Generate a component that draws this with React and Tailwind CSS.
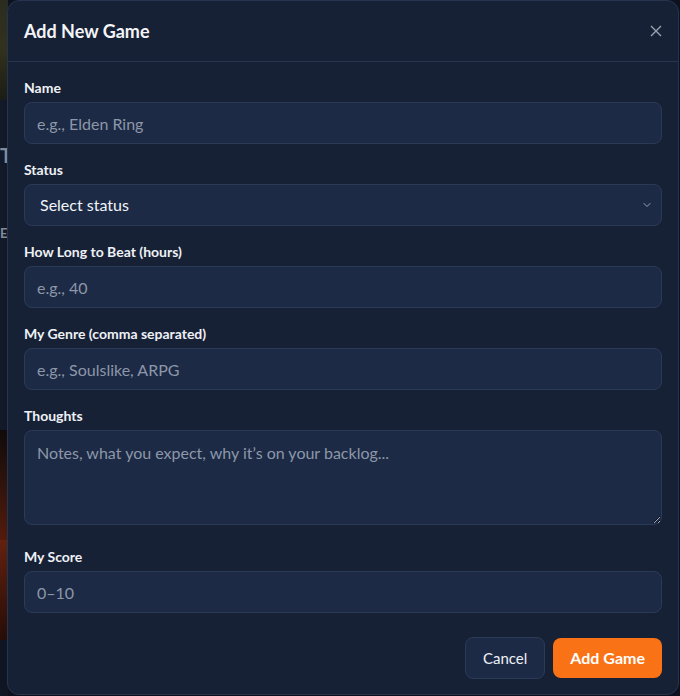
import { ChevronDown } from 'lucide-react';

const inputCls =
    'block w-full h-[42px] rounded-lg border border-[#2b3a57] bg-[#1c2a46] px-3 text-base text-slate-100 placeholder:text-[#8d97a8] outline-none';

function Field({ label, children, className = '' }) {
    return (
        <div className={`flex flex-col gap-1 ${className}`}>
            <label className="text-sm leading-5 font-bold text-[#eef1f6]">{label}</label>
            {children}
        </div>
    );
}

export default function App() {
    return (
        <div className="relative h-[696px] w-full overflow-hidden bg-[#0e1322] font-['Lato','Segoe_UI',sans-serif]">
            {/* page behind the dialog, only its left edge shows */}
            <div className="flex h-full w-[8px] flex-col">
                <div className="h-[100px] bg-gradient-to-b from-[#2a2d20] via-[#35341f] to-[#1d2017]" />
                <div className="h-[330px] bg-[#141b2b] font-bold leading-none text-[#8d96a4]">
                    <div className="pt-[45px] text-[20px]">T</div>
                    <div className="pt-[62px] text-[13px]">E</div>
                </div>
                <div className="h-[110px] bg-gradient-to-b from-[#120c0b] to-[#5a1d0c]" />
                <div className="h-[100px] bg-gradient-to-b from-[#6b2410] to-[#2a0e08]" />
                <div className="flex-1 bg-[#101726]" />
            </div>

            {/* dialog */}
            <div className="absolute left-[7px] top-0 w-[672px] rounded-xl border border-[#27344d] bg-[#172135] shadow-2xl">
                <div className="flex h-[61px] items-center justify-between border-b border-[#27344d] px-4">
                    <h2 className="text-lg font-bold text-[#f3f5f8]">Add New Game</h2>
                    <button className="text-[#9aa3b2]">
                        <svg width="12" height="12" viewBox="0 0 12 12" fill="none" stroke="currentColor" strokeWidth="1.4">
                            <path d="M1 1l10 10M11 1L1 11" />
                        </svg>
                    </button>
                </div>

                <form className="flex flex-col gap-4 px-4 pt-4">
                    <Field label="Name">
                        <input className={inputCls} placeholder="e.g., Elden Ring" />
                    </Field>

                    <Field label="Status">
                        <div className="relative">
                            <select className={`${inputCls} appearance-none pl-[15px]`} defaultValue="">
                                <option value="">Select status</option>
                                <option>Backlog</option>
                                <option>Playing</option>
                                <option>Completed</option>
                            </select>
                            <ChevronDown className="pointer-events-none absolute right-[9px] top-[15px] h-[12px] w-[12px] text-[#9aa3b2]" strokeWidth={2} />
                        </div>
                    </Field>

                    <Field label="How Long to Beat (hours)">
                        <input className={inputCls} placeholder="e.g., 40" />
                    </Field>

                    <Field label="My Genre (comma separated)">
                        <input className={inputCls} placeholder="e.g., Soulslike, ARPG" />
                    </Field>

                    <Field label="Thoughts" className="pb-[6px]">
                        <textarea
                            className="block h-[95px] w-full rounded-lg border border-[#2b3a57] bg-[#1c2a46] px-3 py-[10px] text-base text-slate-100 placeholder:text-[#8d97a8] outline-none"
                            placeholder="Notes, what you expect, why it’s on your backlog..."
                        />
                    </Field>

                    <Field label="My Score">
                        <input className={inputCls} placeholder="0–10" />
                    </Field>
                </form>

                <div className="flex items-center justify-end gap-2 px-4 pb-[15px] pt-[24px]">
                    <button className="rounded-lg border border-[#2b3a57] bg-[#1c2a46] px-[17px] py-[9px] text-[15px] leading-[22px] text-[#eef1f6]">
                        Cancel
                    </button>
                    <button className="rounded-lg bg-[#f97316] px-[17px] py-[9px] text-base leading-[22px] font-bold text-white">
                        Add Game
                    </button>
                </div>
            </div>
        </div>
    );
}
